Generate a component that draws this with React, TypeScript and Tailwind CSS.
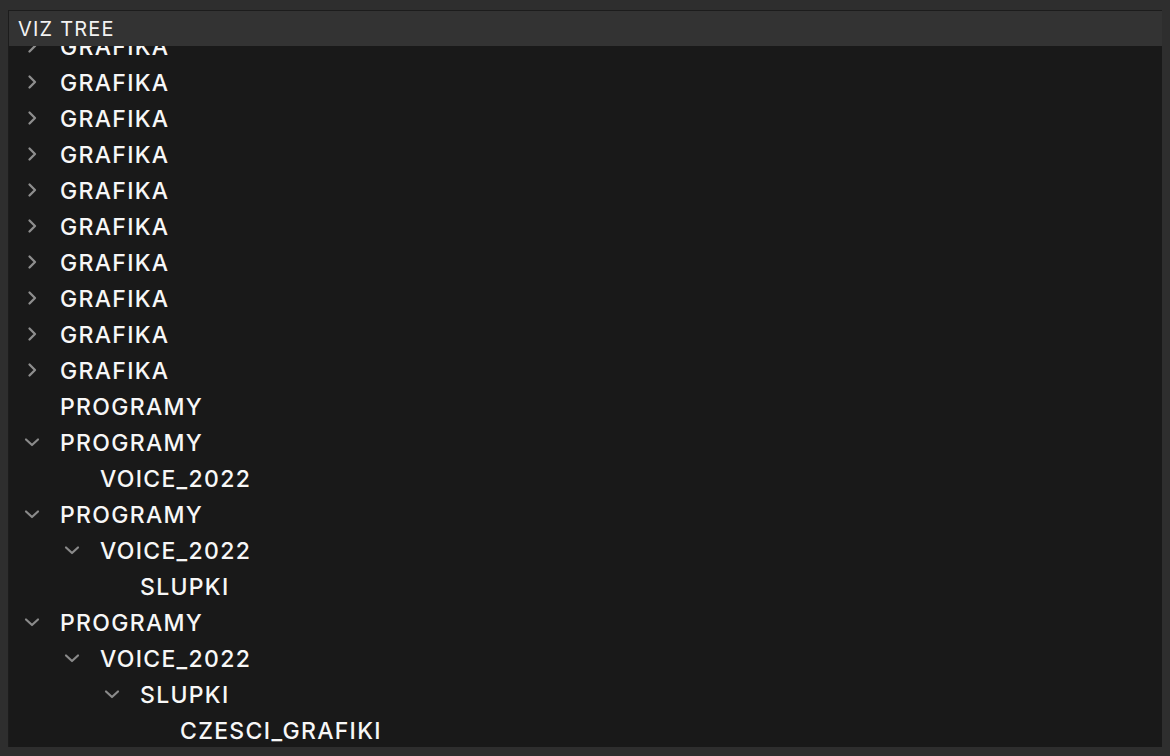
import React from "react";

type Row = { level: number; label: string; chevron: "right" | "down" | null };

const rows: Row[] = [
  ...Array.from({ length: 10 }, () => ({ level: 0, label: "GRAFIKA", chevron: "right" as const })),
  { level: 0, label: "PROGRAMY", chevron: null },
  { level: 0, label: "PROGRAMY", chevron: "down" },
  { level: 1, label: "VOICE_2022", chevron: null },
  { level: 0, label: "PROGRAMY", chevron: "down" },
  { level: 1, label: "VOICE_2022", chevron: "down" },
  { level: 2, label: "SLUPKI", chevron: null },
  { level: 0, label: "PROGRAMY", chevron: "down" },
  { level: 1, label: "VOICE_2022", chevron: "down" },
  { level: 2, label: "SLUPKI", chevron: "down" },
  { level: 3, label: "CZESCI_GRAFIKI", chevron: null },
];

const pad = ["pl-[11px]", "pl-[51px]", "pl-[91px]", "pl-[131px]"];

function Chevron({ dir }: { dir: "right" | "down" | null }) {
  if (!dir) return <span className="w-[40px] shrink-0" />;
  return (
    <span className="w-[40px] shrink-0 flex items-center pl-[4px]">
      {dir === "right" ? (
        <svg width="16" height="16" viewBox="0 0 16 16" fill="none">
          <path d="M5.5 2.5 L11 8 L5.5 13.5" stroke="#8e8e8e" strokeWidth="2.3" strokeLinecap="round" strokeLinejoin="round" />
        </svg>
      ) : (
        <svg width="16" height="16" viewBox="0 0 16 16" fill="none">
          <path d="M2 5.5 L8 11 L14 5.5" stroke="#8a8a8a" strokeWidth="2.2" strokeLinecap="round" strokeLinejoin="round" />
        </svg>
      )}
    </span>
  );
}

export default function App() {
  return (
    <div
      className="w-[1170px] h-[756px] bg-[#2e2e2e] pt-[10px] pl-[8px] pr-[8px] pb-[9px] flex flex-col"
      style={{ fontFamily: "Inter, 'Liberation Sans', sans-serif" }}
    >
      <div className="flex-1 flex flex-col border-l border-t border-[#1c1c1c] min-h-0">
        <div className="h-[35px] bg-[#333333] flex items-center pl-[9px] text-[20px] tracking-[1.2px] text-[#f2f2f2] shrink-0">
          VIZ TREE
        </div>
        <div className="flex-1 bg-[#191919] overflow-hidden min-h-0">
          <div className="-mt-[18px]">
            {rows.map((r, i) => (
              <div key={i} className={`h-[36px] flex items-center ${pad[r.level]}`}>
                <Chevron dir={r.chevron} />
                <span className="text-[23px] font-medium tracking-[1.3px] text-[#f7f7f7] leading-none pt-[2px]">{r.label}</span>
              </div>
            ))}
          </div>
        </div>
      </div>
    </div>
  );
}
